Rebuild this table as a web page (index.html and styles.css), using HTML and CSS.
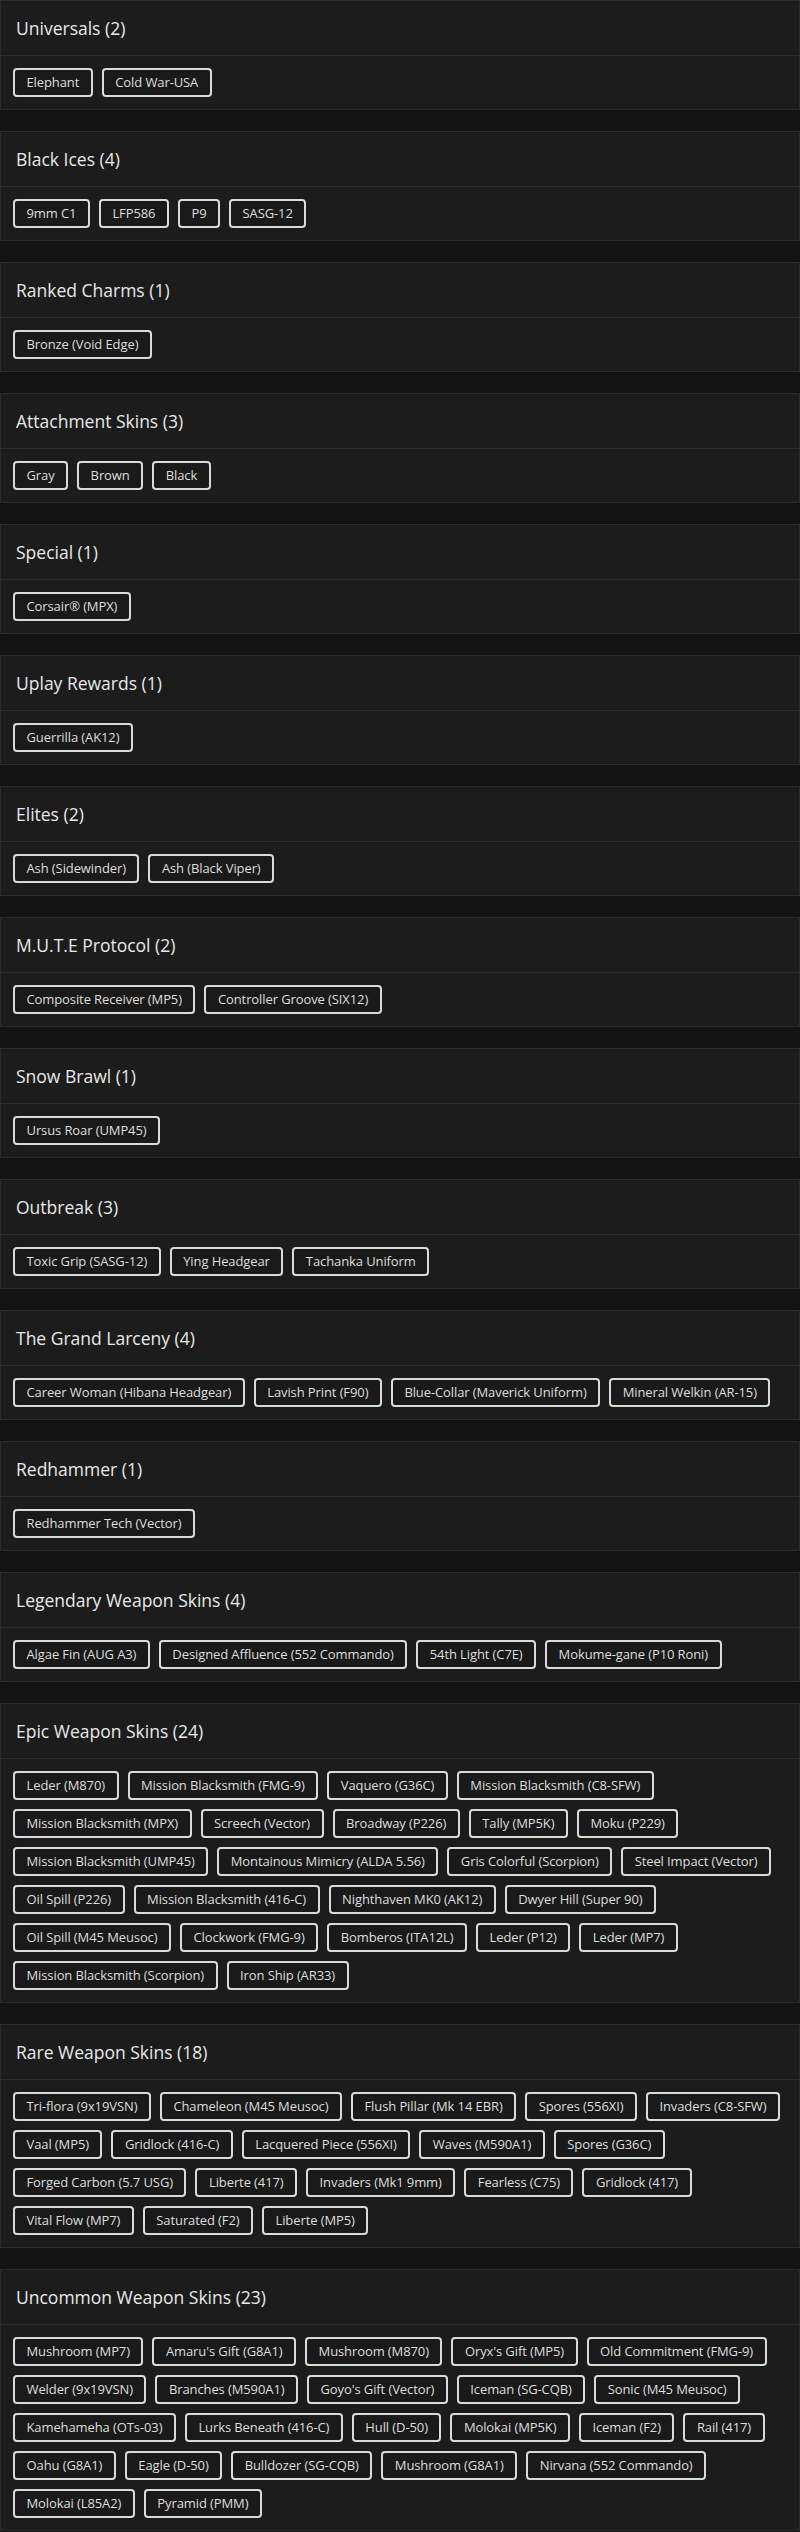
FILE: index.html
```html
<!DOCTYPE html>
<html lang="en">
<head>
<meta charset="utf-8">
<title>Collection</title>
<link rel="stylesheet" href="styles.css">
</head>
<body>
<main class="list">
  <section class="card">
    <header class="card-head"><h2 class="card-title">Universals (2)</h2></header>
    <div class="tags"><span class="tag">Elephant</span><span class="tag">Cold War-USA</span></div>
  </section>
  <section class="card">
    <header class="card-head"><h2 class="card-title">Black Ices (4)</h2></header>
    <div class="tags"><span class="tag">9mm C1</span><span class="tag">LFP586</span><span class="tag">P9</span><span class="tag">SASG-12</span></div>
  </section>
  <section class="card">
    <header class="card-head"><h2 class="card-title">Ranked Charms (1)</h2></header>
    <div class="tags"><span class="tag">Bronze (Void Edge)</span></div>
  </section>
  <section class="card">
    <header class="card-head"><h2 class="card-title">Attachment Skins (3)</h2></header>
    <div class="tags"><span class="tag">Gray</span><span class="tag">Brown</span><span class="tag">Black</span></div>
  </section>
  <section class="card">
    <header class="card-head"><h2 class="card-title">Special (1)</h2></header>
    <div class="tags"><span class="tag">Corsair® (MPX)</span></div>
  </section>
  <section class="card">
    <header class="card-head"><h2 class="card-title">Uplay Rewards (1)</h2></header>
    <div class="tags"><span class="tag">Guerrilla (AK12)</span></div>
  </section>
  <section class="card">
    <header class="card-head"><h2 class="card-title">Elites (2)</h2></header>
    <div class="tags"><span class="tag">Ash (Sidewinder)</span><span class="tag">Ash (Black Viper)</span></div>
  </section>
  <section class="card">
    <header class="card-head"><h2 class="card-title">M.U.T.E Protocol (2)</h2></header>
    <div class="tags"><span class="tag">Composite Receiver (MP5)</span><span class="tag">Controller Groove (SIX12)</span></div>
  </section>
  <section class="card">
    <header class="card-head"><h2 class="card-title">Snow Brawl (1)</h2></header>
    <div class="tags"><span class="tag">Ursus Roar (UMP45)</span></div>
  </section>
  <section class="card">
    <header class="card-head"><h2 class="card-title">Outbreak (3)</h2></header>
    <div class="tags"><span class="tag">Toxic Grip (SASG-12)</span><span class="tag">Ying Headgear</span><span class="tag">Tachanka Uniform</span></div>
  </section>
  <section class="card">
    <header class="card-head"><h2 class="card-title">The Grand Larceny (4)</h2></header>
    <div class="tags"><span class="tag">Career Woman (Hibana Headgear)</span><span class="tag">Lavish Print (F90)</span><span class="tag">Blue-Collar (Maverick Uniform)</span><span class="tag">Mineral Welkin (AR-15)</span></div>
  </section>
  <section class="card">
    <header class="card-head"><h2 class="card-title">Redhammer (1)</h2></header>
    <div class="tags"><span class="tag">Redhammer Tech (Vector)</span></div>
  </section>
  <section class="card">
    <header class="card-head"><h2 class="card-title">Legendary Weapon Skins (4)</h2></header>
    <div class="tags"><span class="tag">Algae Fin (AUG A3)</span><span class="tag">Designed Affluence (552 Commando)</span><span class="tag">54th Light (C7E)</span><span class="tag">Mokume-gane (P10 Roni)</span></div>
  </section>
  <section class="card">
    <header class="card-head"><h2 class="card-title">Epic Weapon Skins (24)</h2></header>
    <div class="tags">
      <span class="tag">Leder (M870)</span><span class="tag">Mission Blacksmith (FMG-9)</span><span class="tag">Vaquero (G36C)</span><span class="tag">Mission Blacksmith (C8-SFW)</span>
      <span class="tag">Mission Blacksmith (MPX)</span><span class="tag">Screech (Vector)</span><span class="tag">Broadway (P226)</span><span class="tag">Tally (MP5K)</span><span class="tag">Moku (P229)</span>
      <span class="tag">Mission Blacksmith (UMP45)</span><span class="tag">Montainous Mimicry (ALDA 5.56)</span><span class="tag">Gris Colorful (Scorpion)</span><span class="tag">Steel Impact (Vector)</span>
      <span class="tag">Oil Spill (P226)</span><span class="tag">Mission Blacksmith (416-C)</span><span class="tag">Nighthaven MK0 (AK12)</span><span class="tag">Dwyer Hill (Super 90)</span>
      <span class="tag">Oil Spill (M45 Meusoc)</span><span class="tag">Clockwork (FMG-9)</span><span class="tag">Bomberos (ITA12L)</span><span class="tag">Leder (P12)</span><span class="tag">Leder (MP7)</span>
      <span class="tag">Mission Blacksmith (Scorpion)</span><span class="tag">Iron Ship (AR33)</span>
    </div>
  </section>
  <section class="card">
    <header class="card-head"><h2 class="card-title">Rare Weapon Skins (18)</h2></header>
    <div class="tags">
      <span class="tag">Tri-flora (9x19VSN)</span><span class="tag">Chameleon (M45 Meusoc)</span><span class="tag">Flush Pillar (Mk 14 EBR)</span><span class="tag">Spores (556XI)</span><span class="tag">Invaders (C8-SFW)</span>
      <span class="tag">Vaal (MP5)</span><span class="tag">Gridlock (416-C)</span><span class="tag">Lacquered Piece (556XI)</span><span class="tag">Waves (M590A1)</span><span class="tag">Spores (G36C)</span>
      <span class="tag">Forged Carbon (5.7 USG)</span><span class="tag">Liberte (417)</span><span class="tag">Invaders (Mk1 9mm)</span><span class="tag">Fearless (C75)</span><span class="tag">Gridlock (417)</span>
      <span class="tag">Vital Flow (MP7)</span><span class="tag">Saturated (F2)</span><span class="tag">Liberte (MP5)</span>
    </div>
  </section>
  <section class="card">
    <header class="card-head"><h2 class="card-title">Uncommon Weapon Skins (23)</h2></header>
    <div class="tags">
      <span class="tag">Mushroom (MP7)</span><span class="tag">Amaru's Gift (G8A1)</span><span class="tag">Mushroom (M870)</span><span class="tag">Oryx's Gift (MP5)</span><span class="tag">Old Commitment (FMG-9)</span>
      <span class="tag">Welder (9x19VSN)</span><span class="tag">Branches (M590A1)</span><span class="tag">Goyo's Gift (Vector)</span><span class="tag">Iceman (SG-CQB)</span><span class="tag">Sonic (M45 Meusoc)</span>
      <span class="tag">Kamehameha (OTs-03)</span><span class="tag">Lurks Beneath (416-C)</span><span class="tag">Hull (D-50)</span><span class="tag">Molokai (MP5K)</span><span class="tag">Iceman (F2)</span><span class="tag">Rail (417)</span>
      <span class="tag">Oahu (G8A1)</span><span class="tag">Eagle (D-50)</span><span class="tag">Bulldozer (SG-CQB)</span><span class="tag">Mushroom (G8A1)</span><span class="tag">Nirvana (552 Commando)</span>
      <span class="tag">Molokai (L85A2)</span><span class="tag">Pyramid (PMM)</span>
    </div>
  </section>
</main>
</body>
</html>
```

FILE: styles.css
```css
* { box-sizing: border-box; }
html, body {
  margin: 0;
  padding: 0;
  background: #131313;
}
body {
  font-family: "Open Sans", "Noto Sans", sans-serif;
  color: #dddddd;
}
.list {
  display: flex;
  flex-direction: column;
  gap: 21px;
}
.card {
  background: #1c1c1c;
  border: 1px solid #2b2b2b;
}
.card-head {
  height: 55px;
  display: flex;
  align-items: center;
  padding: 0 15px;
  border-bottom: 1px solid #2b2b2b;
}
.card-title {
  margin: 0;
  font-size: 17.5px;
  font-weight: 500;
  color: #e8e8e8;
}
.tags {
  display: flex;
  flex-wrap: wrap;
  gap: 9px;
  padding: 12px;
}
.tag {
  display: inline-block;
  height: 29px;
  line-height: 25px;
  padding: 0 11.5px;
  border: 2px solid #dadada;
  border-radius: 4px;
  background: #1a1a1a;
  font-size: 13px;
  letter-spacing: -0.1px;
  color: #dedede;
  white-space: nowrap;
}
```
